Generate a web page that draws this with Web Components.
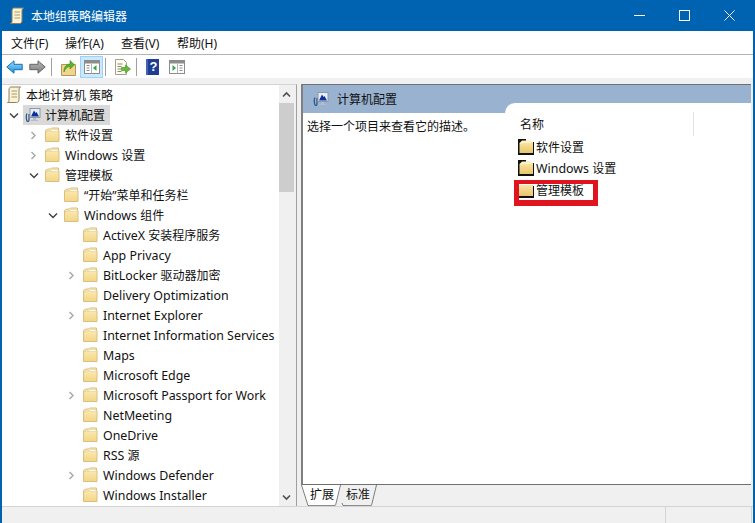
<!DOCTYPE html>
<html lang="zh">
<head>
<meta charset="utf-8">
<title>本地组策略编辑器</title>
<style>
  html, body { margin: 0; height: 100%; overflow: hidden; background: #fff; }
  body { font: 12px "Noto Sans", "Noto Sans CJK SC", sans-serif; color: #111; }
</style>
</head>
<body>
<gpe-window>
  <gpe-titlebar slot="title">本地组策略编辑器</gpe-titlebar>
  <gpe-menubar slot="menu"></gpe-menubar>
  <gpe-toolbar slot="tools"></gpe-toolbar>
  <gpe-tree slot="tree"></gpe-tree>
  <gpe-detail slot="detail"></gpe-detail>
  <gpe-status slot="status"></gpe-status>
</gpe-window>

<script>
const ICONS = {
  folder: `<svg width="16" height="16" viewBox="0 0 16 16">
    <defs><linearGradient id="f" x1="0" y1="0" x2="0" y2="1"><stop offset="0" stop-color="#fdeebb"/><stop offset="1" stop-color="#f3d585"/></linearGradient></defs>
    <path d="M.5 3.500L3 2h2.500l1-1H13.500v2.500H14V14.500H.5z" fill="url(#f)" stroke="#d9c07e" stroke-linejoin="round"/>
    <path d="M1 5.500L3.500 3.500H6.500L7.500 2.500H13V4.500H1z" fill="#fffdf2" stroke="#e2cd96" stroke-width=".6"/>
  </svg>`,
  folderblack: `<svg width="16" height="16" viewBox="0 0 16 16">
    <defs><linearGradient id="fb" x1="0" y1="0" x2="0" y2="1"><stop offset="0" stop-color="#fdeaa9"/><stop offset="1" stop-color="#e8c56c"/></linearGradient></defs>
    <path d="M0 0H8V3H16V16H0z" fill="#111"/>
    <path d="M1.500 4L4 1.500H13.500V3H15V14H1.500z" fill="url(#fb)"/>
    <path d="M1.500 5L4 2.500H13V4H5z" fill="#fff6d2"/>
  </svg>`,
  foldercut: `<svg width="16" height="16" viewBox="0 0 16 16">
    <defs><linearGradient id="fc" x1="0" y1="0" x2="0" y2="1"><stop offset="0" stop-color="#f9e6a6"/><stop offset="1" stop-color="#e8c56c"/></linearGradient></defs>
    <path d="M0 4H16V16H0z" fill="#111"/>
    <path d="M1 3H15V14H1z" fill="url(#fc)"/>
  </svg>`,
  computer: `<svg width="16" height="16" viewBox="0 0 16 16">
    <path d="M2 6.500C1 8 1 12 2 14c1 1 2 0 2-1V7" stroke="#34568c" stroke-width="1.300" fill="none"/>
    <rect x="5" y="1.500" width="10" height="9" fill="#e9eef5" stroke="#8b98a8"/>
    <path d="M6 9.500l3-6 1.500 2.500 1-1 2.500 4.500z" fill="#0b2f9c"/>
    <path d="M8 11h3v2h2v1H6v-1h2z" fill="#b4bcc8"/>
  </svg>`,
  scroll: `<svg width="16" height="20" viewBox="0 0 16 20">
    <path d="M4.500 2h10c-1 .6-1.500 1.500-1.500 3v10c0 1.500-1 2.500-2.500 2.500H1.500C2.700 17 3 16.200 3 15V5c0-1.500.5-2.500 1.500-3z" fill="#fbf3d2" stroke="#8a8064"/>
    <path d="M5.500 6h5.500M5.500 9h5.500M5.500 12h5.500" stroke="#a59a78"/>
  </svg>`,
  back: `<svg width="17" height="16" viewBox="0 0 17 16">
    <defs><linearGradient id="b" x1="0" y1="0" x2="0" y2="1"><stop offset="0" stop-color="#9fdcfb"/><stop offset="1" stop-color="#1a8fdc"/></linearGradient></defs>
    <path d="M.8 8L8 1.800v3.500h8.200v5.400H8v3.500z" fill="url(#b)" stroke="#1a6fb0"/>
  </svg>`,
  forward: `<svg width="17" height="16" viewBox="0 0 17 16">
    <defs><linearGradient id="g" x1="0" y1="0" x2="0" y2="1"><stop offset="0" stop-color="#b8b8b8"/><stop offset="1" stop-color="#7c7c7c"/></linearGradient></defs>
    <path d="M16.200 8L9 1.800v3.500H.8v5.400H9v3.500z" fill="url(#g)" stroke="#666"/>
  </svg>`,
  up: `<svg width="15" height="18" viewBox="0 0 15 18">
    <path d="M.5 6.500h14v11H.5z" fill="#f0d68c" stroke="#b4965a"/>
    <path d="M3 14c-.5-4.500 2.500-8 6-8V2.500l4.500 4.300L9 11V8.500c-2.500 0-5 2-6 5.500z" fill="#58b42d" stroke="#3c8b1d" stroke-width=".6"/>
  </svg>`,
  panelleft: `<svg width="16" height="14" viewBox="0 0 16 14">
    <rect x=".5" y=".5" width="15" height="13" fill="#fff" stroke="#8c8c8c"/>
    <rect x="1" y="1" width="14" height="2.500" fill="#8c8c8c"/>
    <path d="M2.500 5.500h3M2.500 8h3M2.500 10.500h3" stroke="#8c8c8c" stroke-width="1.200"/>
    <path d="M7.500 3.500v10" stroke="#b4b4b4"/>
    <path d="M12.500 5v6l-3.500-3z" fill="#35a34a"/>
  </svg>`,
  panelright: `<svg width="16" height="14" viewBox="0 0 16 14">
    <rect x=".5" y=".5" width="15" height="13" fill="#fff" stroke="#8c8c8c"/>
    <rect x="1" y="1" width="14" height="2.500" fill="#8c8c8c"/>
    <path d="M10.500 5.500h3M10.500 8h3M10.500 10.500h3" stroke="#8c8c8c" stroke-width="1.200"/>
    <path d="M8.500 3.500v10" stroke="#b4b4b4"/>
    <path d="M3.500 5v6l3.500-3z" fill="#35a34a"/>
  </svg>`,
  exportlist: `<svg width="17" height="18" viewBox="0 0 17 18">
    <path d="M1.500 1.500h8l3 3v12h-11z" fill="#fffdf0" stroke="#a4a08c"/>
    <path d="M3.500 6h5M3.500 8.500h4M3.500 11h4M3.500 13.500h4" stroke="#8a8670"/>
    <path d="M7.500 9.500h4V7l5 4-5 4v-2.500h-4z" fill="#64bb3c" stroke="#3f8f21" stroke-width=".6"/>
  </svg>`
};

const chevronRight = `<svg width="9" height="9" viewBox="0 0 9 9"><path d="M2.500 1l3.500 3.500L2.500 8" fill="none" stroke="#a6a6a6" stroke-width="1.400"/></svg>`;
const chevronDown = `<svg width="10" height="9" viewBox="0 0 10 9"><path d="M1 2.500l4 4 4-4" fill="none" stroke="#404040" stroke-width="1.400"/></svg>`;

// latin runs are a bit larger than the CJK around them
const latin = s => s.replace(/[A-Za-z][A-Za-z ]*/g, '<gpe-l>$&</gpe-l>');

customElements.define('gpe-l', class extends HTMLElement {
  constructor() {
    super();
    this.attachShadow({ mode: 'open' }).innerHTML = `
      <style>:host { font-size: 12.400px; }</style>
      <slot></slot>
    `;
  }
});

customElements.define('gpe-window', class extends HTMLElement {
  constructor() {
    super();
    this.attachShadow({ mode: 'open' }).innerHTML = `
      <style>
        :host {
          display: flex;
          flex-direction: column;
          width: 755px;
          height: 523px;
          box-sizing: border-box;
          border-left: 2px solid #0063b1;
          border-right: 2px solid #0063b1;
          background: #f0f0f0;
        }
        .main { display: flex; height: 422px; }
      </style>
      <slot name="title"></slot>
      <slot name="menu"></slot>
      <slot name="tools"></slot>
      <div class="main">
        <slot name="tree"></slot>
        <slot name="detail"></slot>
      </div>
      <slot name="status"></slot>
    `;
  }
});

customElements.define('gpe-titlebar', class extends HTMLElement {
  constructor() {
    super();
    this.attachShadow({ mode: 'open' }).innerHTML = `
      <style>
        :host {
          display: flex;
          align-items: center;
          height: 31px;
          margin: 0 -2px;
          padding-left: 9px;
          background: #0063b1;
          color: #fff;
          font-size: 12px;
        }
        .label { margin-left: 6px; flex: 1; }
        .btn { width: 45px; display: flex; justify-content: center; }
        svg { display: block; }
        .btns { display: flex; padding-right: 3px; }
      </style>
      ${ICONS.scroll}
      <span class="label"><slot></slot></span>
      <div class="btns">
        <div class="btn"><svg width="11" height="11"><path d="M0 5.500h11" stroke="#fff"/></svg></div>
        <div class="btn"><svg width="11" height="11"><rect x=".5" y=".5" width="10" height="10" fill="none" stroke="#fff"/></svg></div>
        <div class="btn"><svg width="11" height="11"><path d="M.5.500l10 10M10.500.500l-10 10" stroke="#fff"/></svg></div>
      </div>
    `;
  }
});

customElements.define('gpe-menubar', class extends HTMLElement {
  constructor() {
    super();
    const items = ['文件(F)', '操作(A)', '查看(V)', '帮助(H)'];
    this.attachShadow({ mode: 'open' }).innerHTML = `
      <style>
        :host {
          display: grid;
          grid-template-columns: 54px 56px 56px auto;
          align-items: center;
          height: 23px;
          padding-left: 9px;
          background: #fff;
          border-bottom: 1px solid #b4b4b4;
        }
      </style>
      ${items.map(t => `<span>${t}</span>`).join('')}
    `;
  }
});

customElements.define('gpe-toolbar', class extends HTMLElement {
  constructor() {
    super();
    this.attachShadow({ mode: 'open' }).innerHTML = `
      <style>
        :host {
          display: flex;
          align-items: center;
          height: 23px;
          padding-left: 4px;
          background: #fff;
          border-bottom: 6px solid #f0f0f0;
        }
        svg { display: block; flex: none; }
        .sep { width: 1px; height: 18px; background: #a0a0a0; flex: none; }
        .on {
          display: flex; align-items: center; justify-content: center;
          width: 23px; height: 22px; box-sizing: border-box;
          background: #cce8ff; border: 1px solid #99d1ff;
          flex: none;
        }
        .help {
          width: 13px; height: 16px; background: #1f3d91; flex: none;
          color: #fff; font: bold 13px/16px "Liberation Sans", sans-serif; text-align: center;
          border-left: 2px solid #4664b5; box-sizing: border-box;
        }
      </style>
      ${ICONS.back}
      <span style="width:6px"></span>
      ${ICONS.forward}
      <span style="width:5px"></span>
      <span class="sep"></span>
      <span style="width:9px"></span>
      ${ICONS.up}
      <span style="width:4px"></span>
      <span class="on">${ICONS.panelleft}</span>
      <span style="width:2px"></span>
      <span class="sep"></span>
      <span style="width:8px"></span>
      ${ICONS.exportlist}
      <span style="width:5px"></span>
      <span class="sep"></span>
      <span style="width:9px"></span>
      <span class="help">?</span>
      <span style="width:10px"></span>
      ${ICONS.panelright}
    `;
  }
});

customElements.define('gpe-row', class extends HTMLElement {
  constructor() {
    super();
    this.attachShadow({ mode: 'open' });
  }
  connectedCallback() {
    const lvl = +this.getAttribute('level') || 0;
    const exp = this.getAttribute('expander');
    const icon = this.getAttribute('icon') || 'folder';
    const sel = this.hasAttribute('selected');
    const pad = lvl < 2 ? 2 : 19 * (lvl - 1) + 3;
    const chev = exp === 'open' ? chevronDown : exp === 'closed' ? chevronRight : '';
    this.shadowRoot.innerHTML = `
      <style>
        :host { display: flex; align-items: center; height: 20px; padding-left: ${pad}px; white-space: nowrap; }
        .chev { width: 19px; height: 20px; display: ${lvl === 0 ? 'none' : 'flex'}; align-items: center; justify-content: center; flex: none; }
        .item { display: flex; align-items: center; height: 20px; gap: 4px; padding: 0 5px 0 2px; ${sel ? 'background:#d9d9d9;' : ''} }
        svg { display: block; flex: none; }
      </style>
      <span class="chev">${chev}</span>
      <span class="item">${ICONS[icon]}<span><slot></slot></span></span>
    `;
  }
});

customElements.define('gpe-tree', class extends HTMLElement {
  constructor() {
    super();
    const rows = [
      [0, '', '本地计算机 策略', 'scroll'],
      [1, 'open', '计算机配置', 'computer', true],
      [2, 'closed', '软件设置'],
      [2, 'closed', 'Windows 设置'],
      [2, 'open', '管理模板'],
      [3, '', '“开始”菜单和任务栏'],
      [3, 'open', 'Windows 组件'],
      [4, '', 'ActiveX 安装程序服务'],
      [4, '', 'App Privacy'],
      [4, 'closed', 'BitLocker 驱动器加密'],
      [4, '', 'Delivery Optimization'],
      [4, 'closed', 'Internet Explorer'],
      [4, '', 'Internet Information Services'],
      [4, '', 'Maps'],
      [4, '', 'Microsoft Edge'],
      [4, 'closed', 'Microsoft Passport for Work'],
      [4, '', 'NetMeeting'],
      [4, '', 'OneDrive'],
      [4, '', 'RSS 源'],
      [4, 'closed', 'Windows Defender'],
      [4, '', 'Windows Installer']
    ];
    this.attachShadow({ mode: 'open' }).innerHTML = `
      <style>
        :host {
          display: flex;
          width: 295px;
          height: 422px;
          flex: none;
          box-sizing: border-box;
          border-top: 1px solid #d4d4d4;
          border-right: 1px solid #a0a0a0;
          background: #fff;
        }
        .rows { flex: 1; overflow: hidden; min-width: 0; }
        .bar { width: 17px; flex: none; background: #f0f0f0; display: flex; flex-direction: column; }
        .arrow { height: 18px; display: flex; align-items: center; justify-content: center; padding-right: 2px; }
        .thumb { height: 89px; width: 15px; background: #cdcdcd; }
        .fill { flex: 1; }
        svg { display: block; }
      </style>
      <div class="rows">
        ${rows.map(r => `<gpe-row level="${r[0]}" expander="${r[1]}" icon="${r[3] || 'folder'}"${r[4] ? ' selected' : ''}>${latin(r[2])}</gpe-row>`).join('')}
      </div>
      <div class="bar">
        <div class="arrow"><svg width="9" height="7"><path d="M1 5.500l3.500-3.500 3.500 3.500" fill="none" stroke="#505050" stroke-width="1.600"/></svg></div>
        <div class="thumb"></div>
        <div class="fill"></div>
        <div class="arrow"><svg width="9" height="7"><path d="M1 1.500l3.500 3.500 3.500-3.500" fill="none" stroke="#505050" stroke-width="1.600"/></svg></div>
      </div>
    `;
  }
});

customElements.define('gpe-tab', class extends HTMLElement {
  constructor() {
    super();
    this.attachShadow({ mode: 'open' });
  }
  connectedCallback() {
    const on = this.hasAttribute('active');
    const fill = on ? '#fff' : '#f0f0f0';
    // the active tab's slant runs the full height, the back one is hidden behind it
    const left = on
      ? `<svg width="8" height="21"><path d="M0 0L7 21H8V0z" fill="${fill}"/><path d="M.5 0L7 20.500H8" fill="none" stroke="#7d7d7d"/></svg>`
      : `<svg width="4" height="21"><path d="M1 18L2 20.500H4" fill="none" stroke="#7d7d7d"/></svg>`;
    this.shadowRoot.innerHTML = `
      <style>
        :host { display: flex; height: 21px; align-items: stretch; }
        svg { display: block; flex: none; }
        span { background: ${fill}; border-bottom: 1px solid #8c8c8c; width: 26px; text-align: center; line-height: 19px; box-sizing: border-box; height: 21px; }
      </style>
      ${left}
      <span><slot></slot></span>
      <svg width="6" height="21"><path d="M6 0L1 21H0V0z" fill="${fill}"/><path d="M5.500 0L.5 20.500" fill="none" stroke="#7d7d7d"/></svg>
    `;
  }
});

customElements.define('gpe-detail', class extends HTMLElement {
  constructor() {
    super();
    this.attachShadow({ mode: 'open' }).innerHTML = `
      <style>
        :host {
          display: flex;
          flex-direction: column;
          width: 450px;
          height: 422px;
          margin-left: 4px;
          flex: none;
        }
        .frame {
          height: 401px;
          box-sizing: border-box;
          display: flex;
          flex-direction: column;
          border-top: 1px solid #707070;
          border-left: 2px solid #808080;
          border-bottom: 1px solid #707070;
          background: #fff;
        }
        .head {
          display: flex; align-items: center; gap: 8px;
          height: 28px; flex: none; padding-left: 10px;
          background: #98b2d0;
        }
        .body { display: flex; flex: 1; min-height: 0; }
        .desc { flex: 1; padding: 5px 0 0 4px; line-height: 18px; }
        .list {
          position: relative;
          width: 246px; flex: none;
          margin-top: -10px;
          background: #fff;
          border-top-left-radius: 10px;
        }
        .col {
          display: flex; align-items: center;
          height: 33px; margin-right: 57px;
          padding: 8px 0 0 15px; box-sizing: border-box;
        }
        .col b { font-weight: 400; flex: 1; }
        .col i { width: 1px; height: 24px; background: #e3e3e3; align-self: flex-end; }
        .row { display: flex; align-items: center; height: 21.500px; padding-left: 13px; gap: 2px; }
        svg { display: block; flex: none; }
        .red {
          position: absolute;
          left: 9px; top: 77px;
          width: 84px; height: 26px;
          box-sizing: border-box;
          border: solid #e0141f;
          border-width: 4px 5px 6px;
        }
        .tabs {
          display: flex; height: 21px; flex: none;
          background: #f0f0f0;
        }
      </style>
      <div class="frame">
        <div class="head">${ICONS.computer}<span>计算机配置</span></div>
        <div class="body">
          <div class="desc">选择一个项目来查看它的描述。</div>
          <div class="list">
            <div class="col"><b>名称</b><i></i></div>
            <div class="row">${ICONS.folderblack}<span>软件设置</span></div>
            <div class="row">${ICONS.folderblack}<span>${latin('Windows 设置')}</span></div>
            <div class="row">${ICONS.foldercut}<span>管理模板</span></div>
            <div class="red"></div>
          </div>
        </div>
      </div>
      <div class="tabs">
        <gpe-tab active>扩展</gpe-tab>
        <gpe-tab>标准</gpe-tab>
      </div>
    `;
  }
});

customElements.define('gpe-status', class extends HTMLElement {
  constructor() {
    super();
    this.attachShadow({ mode: 'open' }).innerHTML = `
      <style>
        :host {
          display: flex;
          height: 17px;
          box-sizing: border-box;
          border-top: 1px solid #d4d4d4;
          background: #f0f0f0;
        }
        div { border-right: 1px solid #d4d4d4; }
        .a { width: 663px; flex: none; }
        .b { width: 85px; flex: none; }
      </style>
      <div class="a"></div>
      <div class="b"></div>
    `;
  }
});
</script>
</body>
</html>
